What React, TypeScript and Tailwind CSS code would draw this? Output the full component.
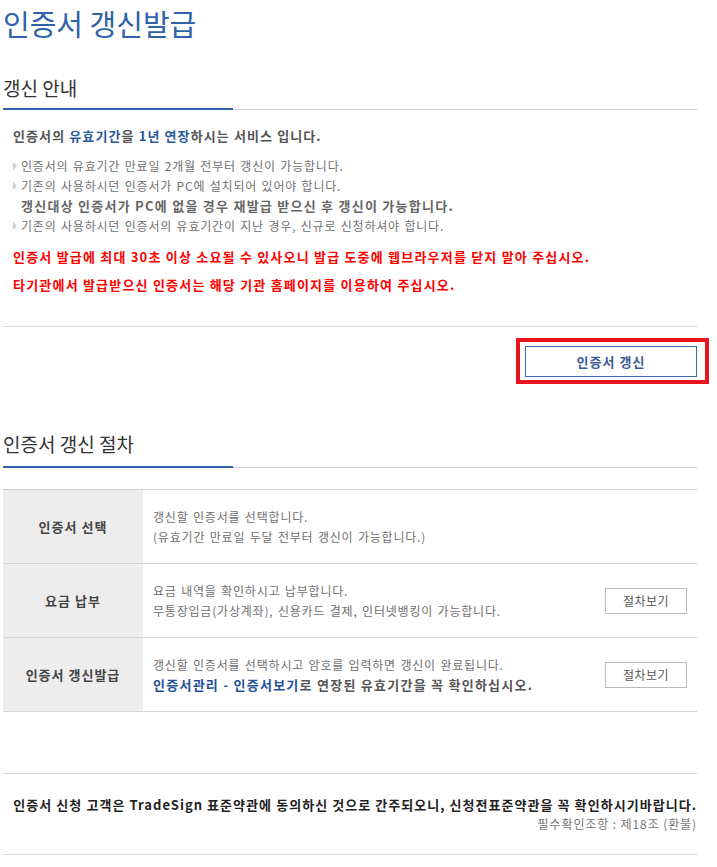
import React from 'react';

const font = "font-['Noto_Sans_CJK_KR','Noto_Sans',sans-serif]";

const Bullet = ({ children }: { children: React.ReactNode }) => (
  <li className="flex items-center">
    <span className="ml-[10px] mr-[4px] h-0 w-0 border-y-[4px] border-l-[4px] border-y-transparent border-l-[#cccccc]"></span>
    <span>{children}</span>
  </li>
);

const steps = [
  {
    label: '인증서 선택',
    lines: [<>갱신할 인증서를 선택합니다.</>, <>(유효기간 만료일 두달 전부터 갱신이 가능합니다.)</>],
    button: false,
  },
  {
    label: '요금 납부',
    lines: [<>요금 내역을 확인하시고 납부합니다.</>, <>무통장입금(가상계좌), 신용카드 결제, 인터넷뱅킹이 가능합니다.</>],
    button: true,
  },
  {
    label: '인증서 갱신발급',
    lines: [
      <>갱신할 인증서를 선택하시고 암호를 입력하면 갱신이 완료됩니다.</>,
      <span className="text-[13px] font-bold tracking-[1.25px] text-[#555] [word-spacing:0px]">
        <span className="text-[#1f4f9c]">인증서관리 - 인증서보기</span>로 연장된 유효기간을 꼭 확인하십시오.
      </span>,
    ],
    button: true,
  },
];

export default function App() {
  return (
    <div className={`${font} min-h-[867px] w-[717px] bg-white`}>
      <div className="ml-[3px] w-[694px]">
        <h2 className="pt-[9px] text-[29px] leading-none text-[#2f62a8]">인증서 갱신발급</h2>

        <div className="mt-[40px] border-b border-[#d2d2d2]">
          <h3 className="-mb-px w-[230px] border-b-2 border-[#2f62a8] pb-[11px] text-[19px] leading-none text-[#333]">갱신 안내</h3>
        </div>

        <div className="border-b border-[#d8d8d8] pb-[31px]">
          <p className="mt-[16px] pl-[10px] text-[13px] font-bold leading-[20px] tracking-[1.1px] text-[#555]">
            인증서의 <span className="text-[#2c5aa0]">유효기간</span>을 <span className="text-[#2c5aa0]">1년 연장</span>하시는 서비스 입니다.
          </p>
          <ul className="mt-[10px] text-[12px] leading-[20px] tracking-[0.8px] text-[#707070] [word-spacing:1px]">
            <Bullet>인증서의 유효기간 만료일 2개월 전부터 갱신이 가능합니다.</Bullet>
            <Bullet>기존의 사용하시던 인증서가 PC에 설치되어 있어야 합니다.</Bullet>
            <li className="pl-[18px] text-[13px] font-bold tracking-[1.25px] text-[#666] [word-spacing:0px]">
              갱신대상 인증서가 PC에 없을 경우 재발급 받으신 후 갱신이 가능합니다.
            </li>
            <Bullet>기존의 사용하시던 인증서의 유효기간이 지난 경우, 신규로 신청하셔야 합니다.</Bullet>
          </ul>
          <p className="mt-[11px] pl-[10px] text-[13px] font-bold leading-[20px] tracking-[1.2px] text-[#ff0000]">
            인증서 발급에 최대 30초 이상 소요될 수 있사오니 발급 도중에 웹브라우저를 닫지 말아 주십시오.
          </p>
          <p className="mt-[8px] pl-[10px] text-[13px] font-bold leading-[20px] tracking-[1.2px] text-[#ff0000]">
            타기관에서 발급받으신 인증서는 해당 기관 홈페이지를 이용하여 주십시오.
          </p>
        </div>

        <div className="mt-[19px] flex justify-end">
          <div className="relative">
            <button className="h-[31px] w-[172px] border border-[#3a6db0] bg-white text-[13px] font-bold tracking-[1px] text-[#3c5a96]">
              인증서 갱신
            </button>
            <span className="pointer-events-none absolute -bottom-[7px] -left-[9px] -right-[12px] -top-[8px] border-4 border-[#e8141e]"></span>
          </div>
        </div>

        <div className="mt-[57px] border-b border-[#d2d2d2]">
          <h3 className="-mb-px w-[230px] border-b-2 border-[#2f62a8] pb-[13px] text-[19px] leading-none text-[#333]">인증서 갱신 절차</h3>
        </div>

        <div className="mt-[21px] border-t border-[#d0d0d0]">
          {steps.map((s) => (
            <div key={s.label} className="flex h-[74px] border-b border-[#d5d5d5]">
              <div className="flex w-[140px] items-center justify-center bg-[#ededed] text-[13px] font-bold tracking-[1px] text-[#444]">
                {s.label}
              </div>
              <div className="flex flex-1 items-center justify-between pl-[10px] pr-[10px]">
                <div className="text-[12px] leading-[20px] tracking-[0.8px] text-[#707070] [word-spacing:1px]">
                  {s.lines.map((l, i) => (
                    <div key={i}>{l}</div>
                  ))}
                </div>
                {s.button && (
                  <button className="h-[26px] w-[82px] border border-[#bbbbbb] bg-white text-[12px] tracking-[0.5px] text-[#555]">절차보기</button>
                )}
              </div>
            </div>
          ))}
        </div>

        <div className="mt-[61px] border-y border-[#d8d8d8] pb-[21px] pt-[21px] text-right">
          <p className="text-[13px] font-bold leading-[20px] tracking-[1.05px] text-[#222]">
            인증서 신청 고객은 TradeSign 표준약관에 동의하신 것으로 간주되오니, 신청전표준약관을 꼭 확인하시기바랍니다.
          </p>
          <p className="text-[12px] leading-[18px] tracking-[0.9px] text-[#777]">필수확인조항 : 제18조 (환불)</p>
        </div>
      </div>
    </div>
  );
}
